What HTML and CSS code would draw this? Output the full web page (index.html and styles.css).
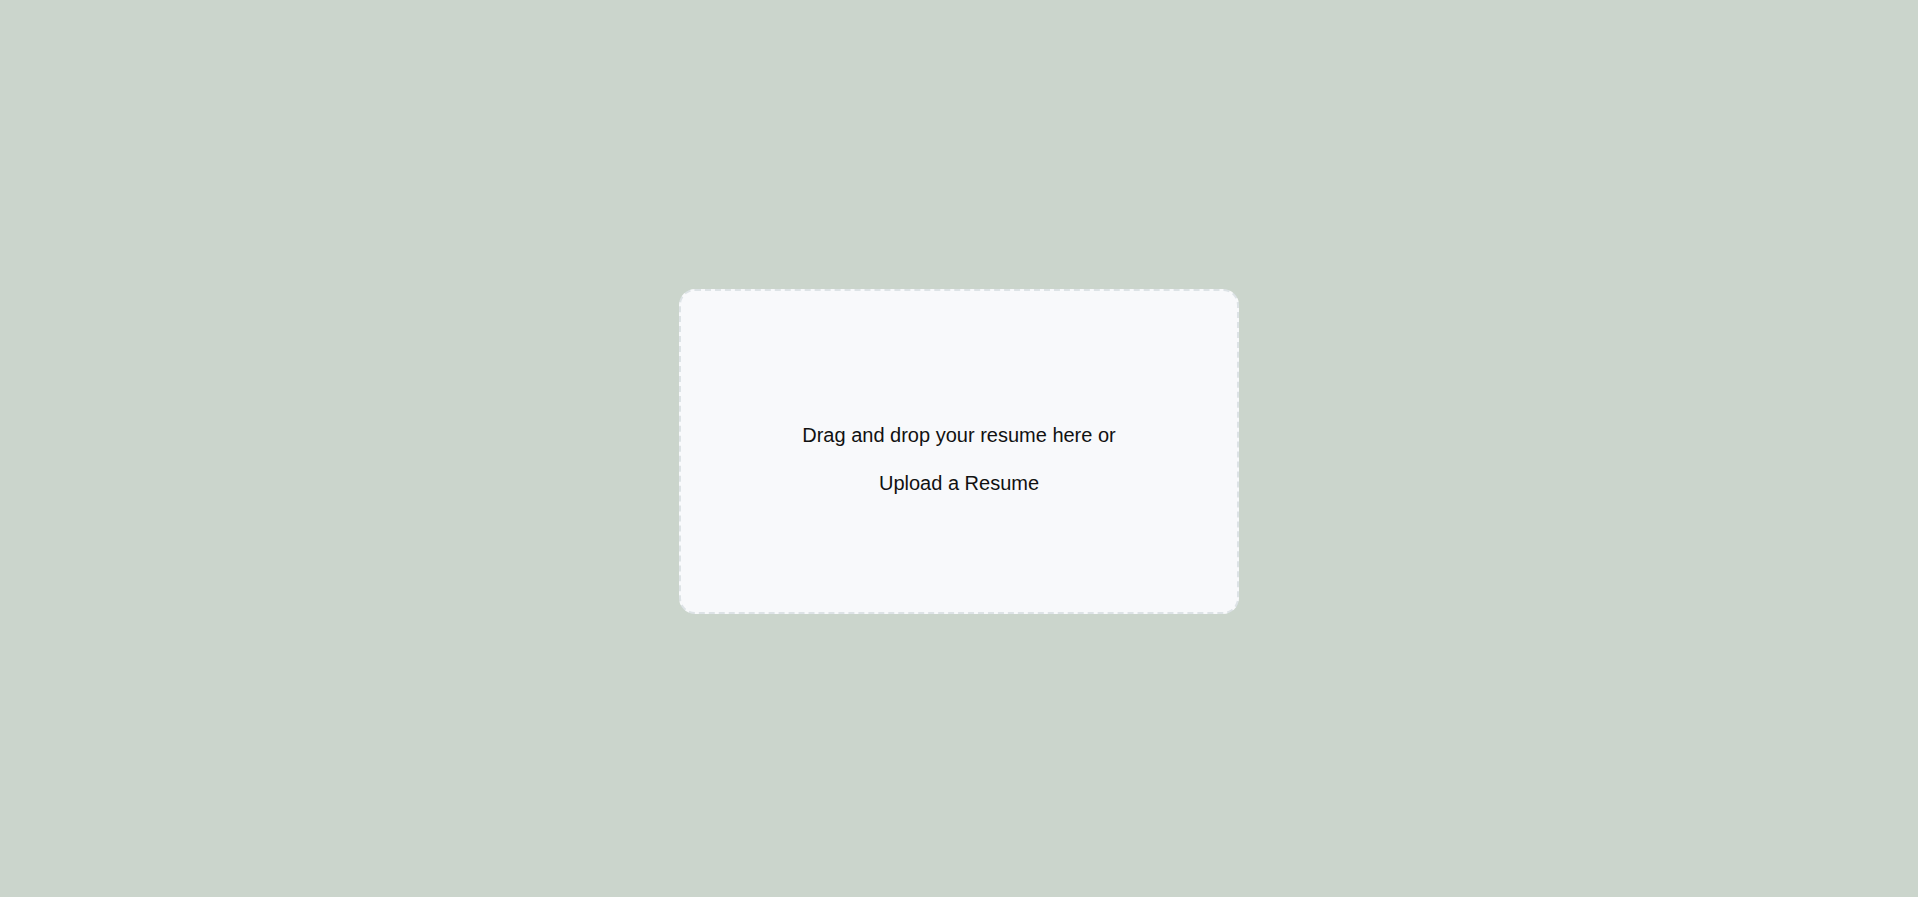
FILE: index.html
```html
<!DOCTYPE html>
<html lang="en">
<head>
<meta charset="utf-8">
<title>Upload Resume</title>
<link rel="stylesheet" href="styles.css">
</head>
<body>
<main class="page">
  <div class="dropzone">
    <p class="drop-text">Drag and drop your resume here or</p>
    <label class="upload-label">Upload a Resume</label>
  </div>
</main>
</body>
</html>
```
FILE: styles.css
```css
html, body {
  margin: 0;
  padding: 0;
  height: 100%;
}
body {
  background: #cbd5cc;
  font-family: "Liberation Sans", Arial, sans-serif;
  color: #111;
}
.page {
  box-sizing: border-box;
  height: 100vh;
  padding-top: 6px;
  display: flex;
  align-items: center;
  justify-content: center;
}
.dropzone {
  box-sizing: border-box;
  width: 560px;
  height: 325px;
  padding-top: 14px;
  background: #f8f9fb;
  border: 2px dashed #dde3e6;
  border-radius: 16px;
  display: flex;
  flex-direction: column;
  align-items: center;
  justify-content: center;
  gap: 24px;
}
.drop-text, .upload-label {
  margin: 0;
  font-size: 20px;
  line-height: 24px;
}
```
